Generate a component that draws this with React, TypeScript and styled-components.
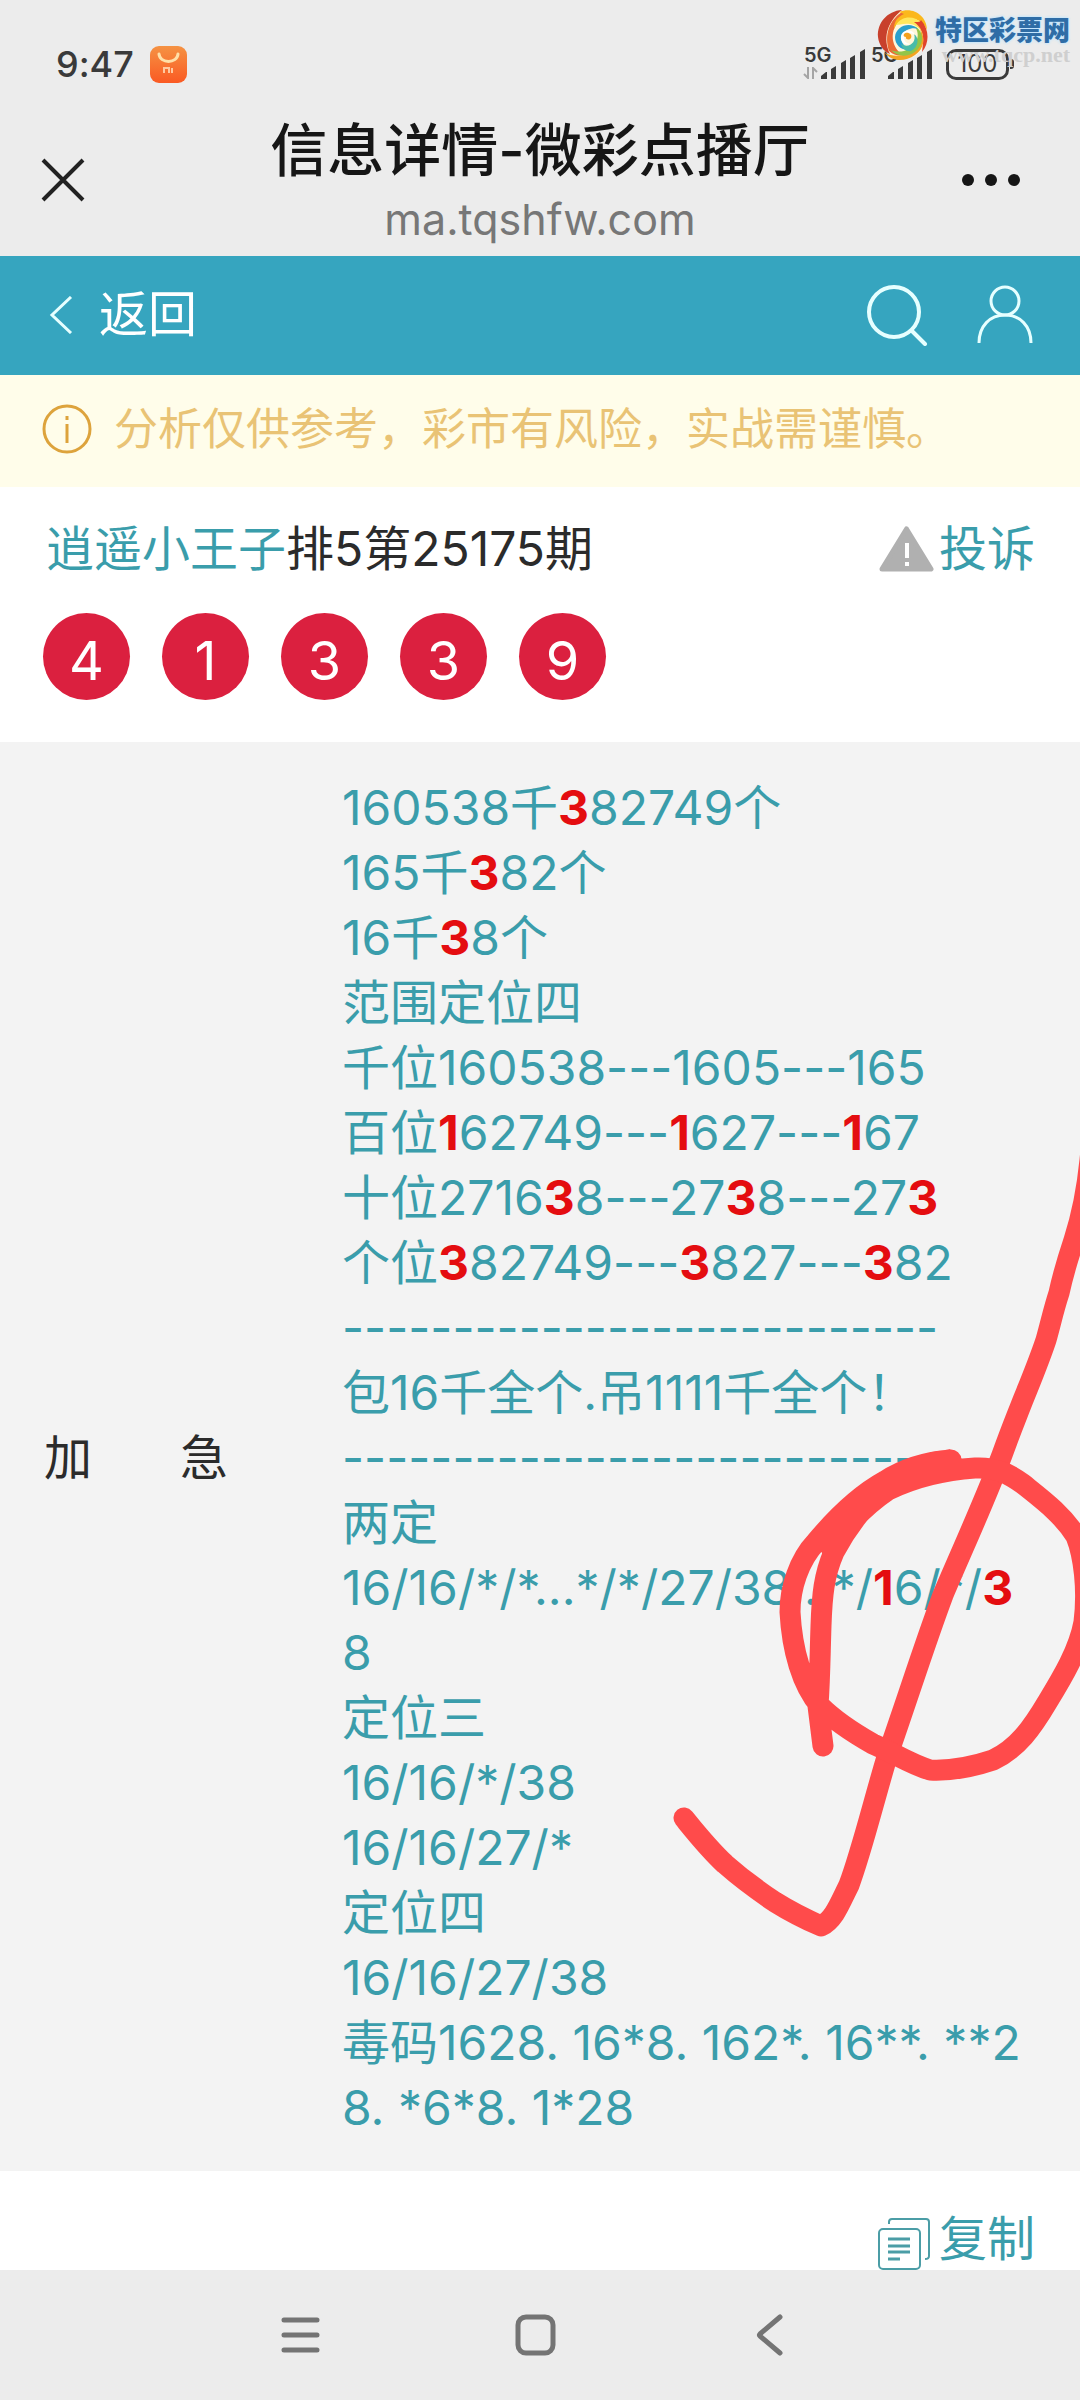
import React from "react";
import styled, { createGlobalStyle } from "styled-components";

const GlobalStyle = createGlobalStyle`
  *, *::before, *::after { box-sizing: border-box; }
  body {
    margin: 0;
    background: #ececec;
    font-family: Inter, "Noto Sans CJK SC", sans-serif;
    font-variant-ligatures: no-contextual;
    color: #2b2b2b;
  }
  button, a { font: inherit; color: inherit; }
`;

const TEAL = "#3a9dab";

const Page = styled.div`
  position: relative;
  display: flex;
  flex-direction: column;
  min-height: 100vh;
  overflow: hidden;
  background: #fff;
`;

const IconButton = styled.button`
  display: flex;
  align-items: center;
  padding: 0;
  border: 0;
  background: none;
  cursor: pointer;
`;

const StatusBar = styled.div`
  display: flex;
  align-items: center;
  justify-content: space-between;
  height: 84px;
  padding: 44px 66px 0 56px;
  background: #ececec;
`;

const StatusGroup = styled.div<{ $gap: number }>`
  display: flex;
  align-items: center;
  gap: ${(p) => p.$gap}px;
`;

const Clock = styled.time`
  font-size: 36px;
  line-height: 40px;
  font-weight: 500;
  color: #3a3a3a;
`;

const Signals = styled.div`
  display: flex;
  gap: 6px;
`;

const SignalBox = styled.div`
  position: relative;
  display: flex;
  padding-left: 17px;
`;

const Network = styled.span`
  position: absolute;
  left: 0;
  top: -4px;
  font-size: 20px;
  line-height: 20px;
  font-weight: 600;
  color: #3a3a3a;
`;

const DataArrows = styled.svg`
  position: absolute;
  left: -1px;
  bottom: 0;
`;

const Battery = styled.div`
  display: flex;
  align-items: center;
`;

const BatteryBody = styled.div`
  display: flex;
  align-items: center;
  justify-content: center;
  width: 63px;
  height: 31px;
  border: 3px solid #3a3a3a;
  border-radius: 10px;
  font-size: 24px;
  line-height: 24px;
  color: #3a3a3a;
`;

const BatteryTip = styled.div`
  width: 4px;
  height: 10px;
  margin-left: 1px;
  border-radius: 0 3px 3px 0;
  background: #3a3a3a;
`;

const Watermark = styled.div`
  position: absolute;
  top: 8px;
  right: 10px;
  display: flex;
  gap: 6px;
`;

const WatermarkText = styled.div`
  display: flex;
  flex-direction: column;
  padding-top: 7px;
`;

const WatermarkName = styled.span`
  font-size: 27px;
  line-height: 32px;
  font-weight: 900;
  color: #2f6da6;
  text-shadow: 0 0 3px #bfe4ff, 0 0 3px #bfe4ff;
`;

const WatermarkUrl = styled.span`
  font-family: "Liberation Serif", serif;
  font-size: 22px;
  line-height: 16px;
  font-weight: 700;
  text-align: right;
  color: #cfcfcf;
`;

const TitleBar = styled.header`
  display: grid;
  grid-template-columns: 1fr auto 1fr;
  align-items: center;
  height: 172px;
  padding: 20px 41px 0;
  background: #ececec;
`;

const TitleBlock = styled.div`
  display: flex;
  flex-direction: column;
  align-items: center;
  gap: 4px;
  padding-top: 5px;
`;

const PageTitle = styled.h1`
  margin: 0;
  font-size: 57px;
  line-height: 68px;
  font-weight: 500;
  color: #161616;
`;

const Domain = styled.span`
  font-size: 43px;
  line-height: 60px;
  color: #777;
`;

const MenuButton = styled(IconButton)`
  justify-self: end;
  padding-right: 19px;
`;

const NavBar = styled.nav`
  display: flex;
  align-items: center;
  justify-content: space-between;
  height: 119px;
  padding: 0 46px 2px 49px;
  background: #36a5bf;
  color: #fff;
`;

const BackLink = styled.a`
  display: flex;
  align-items: center;
  gap: 26px;
  font-size: 49px;
  line-height: 64px;
  text-decoration: none;
`;

const NavActions = styled.div`
  display: flex;
  gap: 48px;
`;

const Notice = styled.p`
  display: flex;
  align-items: center;
  gap: 22px;
  height: 112px;
  margin: 0;
  padding: 0 42px 4px;
  background: #fffdea;
  font-size: 44px;
  line-height: 64px;
  color: #e9c375;
`;

const Summary = styled.section`
  display: flex;
  flex-direction: column;
  gap: 32px;
  padding: 30px 45px 42px 43px;
`;

const SummaryHead = styled.div`
  display: flex;
  align-items: center;
  justify-content: space-between;
`;

const Issue = styled.h2`
  margin: 0;
  padding-left: 3px;
  font-size: 48px;
  line-height: 64px;
  font-weight: 400;
`;

const Author = styled.a`
  color: ${TEAL};
  text-decoration: none;
`;

const ActionButton = styled(IconButton)<{ $gap: number }>`
  gap: ${(p) => p.$gap}px;
  font-size: 48px;
  line-height: 64px;
  color: ${TEAL};
`;

const Balls = styled.ol`
  display: flex;
  gap: 32px;
  margin: 0;
  padding: 0;
  list-style: none;
`;

const Ball = styled.li`
  display: flex;
  align-items: center;
  justify-content: center;
  width: 87px;
  height: 87px;
  padding-top: 8px;
  border-radius: 50%;
  background: #db203f;
  font-size: 54px;
  line-height: 64px;
  color: #fff;
`;

const Record = styled.section`
  position: relative;
  display: grid;
  grid-template-columns: 298px 1fr;
  align-items: center;
  padding: 33px 43px 31px 44px;
  background: #f3f3f3;
`;

const RecordLabel = styled.h3`
  display: flex;
  gap: 88px;
  margin: 0;
  font-size: 48px;
  line-height: 65px;
  font-weight: 400;
`;

const RecordBody = styled.div`
  font-size: 48px;
  line-height: 65px;
  color: ${TEAL};
`;

const Line = styled.p`
  height: 65px;
  margin: 0;
  white-space: pre;
`;

const Hit = styled.strong`
  font-weight: 700;
  color: #e40d10;
`;

const PenMarks = styled.svg`
  position: absolute;
  right: 0;
  top: 338px;
  pointer-events: none;
`;

const Footer = styled.footer`
  display: flex;
  justify-content: flex-end;
  align-items: flex-start;
  height: 99px;
  padding: 36px 45px 0;
`;

const CopyIcon = styled.svg`
  margin-top: 10px;
`;

const SystemNav = styled.nav`
  display: flex;
  flex: 1;
  align-items: center;
  justify-content: center;
  gap: 191px;
  min-height: 130px;
  padding-right: 10px;
  background: #ececec;
`;

/* Winning digits are wrapped in brackets. */
const LINES = [
  "160538千[3]82749个",
  "165千[3]82个",
  "16千[3]8个",
  "范围定位四",
  "千位160538---1605---165",
  "百位[1]62749---[1]627---[1]67",
  "十位2716[3]8---27[3]8---27[3]",
  "个位[3]82749---[3]827---[3]82",
  "---------------------------",
  "包16千全个.吊1111千全个！",
  "---------------------------",
  "两定",
  "16/16/*/*...*/*/27/38...*/[1]6/*/[3]",
  "8",
  "定位三",
  "16/16/*/38",
  "16/16/27/*",
  "定位四",
  "16/16/27/38",
  "毒码1628. 16*8. 162*. 16**. **2",
  "8. *6*8. 1*28",
];

function renderLine(text: string) {
  return text
    .split(/(\[\d\])/)
    .map((part, i) =>
      part.startsWith("[") ? <Hit key={i}>{part[1]}</Hit> : part
    );
}

function Signal({ data }: { data?: boolean }) {
  return (
    <SignalBox>
      <Network>5G</Network>
      {data && (
        <DataArrows width="16" height="12" viewBox="0 0 16 12" fill="none" stroke="#a5a5a5" strokeWidth="2">
          <path d="M5 0v11L1 7M10 12V1l4 4" />
        </DataArrows>
      )}
      <svg width="44" height="30" viewBox="0 0 44 30" fill="#3a3a3a">
        <path d="M0 30v-3l5-4h1v7zM10 30V20l5-3v13zM20 30V14l5-3v19zM29 30V9l5-3v24zM39 30V3l5-3v30z" />
      </svg>
    </SignalBox>
  );
}

function SwirlLogo() {
  return (
    <svg width="52" height="54" viewBox="0 0 52 54">
      <circle cx="26" cy="27" r="24" fill="#fff6da" />
      <path d="M25 2C10 3 0 15 1 29c1 8 5 14 12 17C6 31 9 15 25 2z" fill="#c8402c" />
      <path d="M27 3C12 11 7 27 12 43c6 5 10 5 14 4C12 38 12 18 28 8z" fill="#ea6a35" />
      <path d="M22 4c14-6 28 4 28 18-4-9-12-13-21-11-6 1-10 5-12 10C17 14 20 9 27 6z" fill="#fbb81c" />
      <path d="M19 17c5-9 18-10 25-2 4 5 5 11 3 17-1-9-6-15-14-16-6-1-11 1-14 1z" fill="#ffe75c" />
      <path d="M44 12c8 9 9 22 1 32 1-8 2-14 0-20-2-5-5-8-8-10 5 0 6 0 7-2z" fill="#e0432b" />
      <path d="M8 45c10 5 23 3 31-6 5-6 6-12 4-18 6 9 4 20-5 26-10 7-23 7-30-2z" fill="#f2a423" />
      <path d="M14 42c10 4 20 0 25-8 3-6 2-12-2-16 8 3 10 13 6 20-6 11-21 13-29 4z" fill="#93c548" />
      <path d="M41 21c-8-8-22-3-23 8 0 10 10 16 18 11-12 1-16-13-6-18 4-2 8-2 11-1z" fill="#2ba0cc" />
      <path d="M24 36c8 5 16-2 13-10 6 4 4 14-3 17-4 1-9-2-10-7z" fill="#49bba8" />
      <path d="M38 27c-2-6-12-6-14 1-1 6 4 10 9 8-8-1-7-10-1-11 3 0 5 1 6 2z" fill="#fff" />
      <path d="M27 26c3-3 9 0 7 4-2 3-6 1-5-1-2 0-3-1-2-3z" fill="#f5a11c" />
    </svg>
  );
}

export default function App() {
  return (
    <Page lang="zh-CN">
      <GlobalStyle />
      <StatusBar>
        <StatusGroup $gap={16}>
          <Clock>9:47</Clock>
          <svg width="37" height="37" viewBox="0 0 37 37" fill="none">
            <defs>
              <linearGradient id="store" x1="0" y1="0" x2="0" y2="1">
                <stop offset="0" stopColor="#f59243" />
                <stop offset="1" stopColor="#fa5a23" />
              </linearGradient>
            </defs>
            <rect width="37" height="37" rx="9" fill="url(#store)" />
            <path d="M9 8c1 10 18 10 19 0" stroke="#ffe0a8" strokeWidth="3" strokeLinecap="round" />
            <path d="M14 27v-5h5v5M22 22v5" stroke="#ffc9a0" strokeWidth="2" />
          </svg>
        </StatusGroup>
        <StatusGroup $gap={14}>
          <Signals>
            <Signal data />
            <Signal />
          </Signals>
          <Battery>
            <BatteryBody>100</BatteryBody>
            <BatteryTip />
          </Battery>
        </StatusGroup>
      </StatusBar>
      <Watermark>
        <SwirlLogo />
        <WatermarkText>
          <WatermarkName>特区彩票网</WatermarkName>
          <WatermarkUrl>www.tqcp.net</WatermarkUrl>
        </WatermarkText>
      </Watermark>

      <TitleBar>
        <IconButton aria-label="关闭">
          <svg width="44" height="44" viewBox="0 0 44 44" stroke="#222" strokeWidth="4">
            <path d="M2 2l40 40M42 2L2 42" />
          </svg>
        </IconButton>
        <TitleBlock>
          <PageTitle>信息详情-微彩点播厅</PageTitle>
          <Domain>ma.tqshfw.com</Domain>
        </TitleBlock>
        <MenuButton aria-label="更多">
          <svg width="58" height="12" viewBox="0 0 58 12" fill="#161616">
            <circle cx="6" cy="6" r="6" />
            <circle cx="29" cy="6" r="6" />
            <circle cx="52" cy="6" r="6" />
          </svg>
        </MenuButton>
      </TitleBar>

      <NavBar>
        <BackLink href="#back">
          <svg width="24" height="38" viewBox="0 0 24 38" fill="none" stroke="#e6ffff" strokeWidth="3">
            <path d="M22 1L3 19l19 18" />
          </svg>
          返回
        </BackLink>
        <NavActions>
          <IconButton aria-label="搜索">
            <svg width="62" height="62" viewBox="0 0 62 62" fill="none" stroke="#e6ffff" strokeWidth="4" strokeLinecap="round">
              <circle cx="28" cy="28" r="25" />
              <path d="M46 47l13 13" />
            </svg>
          </IconButton>
          <IconButton aria-label="我的">
            <svg width="58" height="62" viewBox="0 0 58 62" fill="none" stroke="#e6ffff" strokeWidth="3">
              <circle cx="29" cy="17" r="14" />
              <path d="M3 59C3 42 14 31 29 31s26 11 26 28" />
            </svg>
          </IconButton>
        </NavActions>
      </NavBar>

      <Notice>
        <svg width="50" height="50" viewBox="0 0 50 50" fill="none" stroke="#dda33c" strokeWidth="3">
          <circle cx="25" cy="25" r="23" />
          <path d="M25 20v19M25 12v4" />
        </svg>
        分析仅供参考，彩市有风险，实战需谨慎。
      </Notice>

      <Summary>
        <SummaryHead>
          <Issue>
            <Author href="#author">逍遥小王子</Author>排5第25175期
          </Issue>
          <ActionButton $gap={5}>
            <svg width="55" height="46" viewBox="0 0 55 46">
              <path d="M27.500 3L52 43H3z" fill="#b0b0b0" stroke="#b0b0b0" strokeWidth="5" strokeLinejoin="round" />
              <path d="M28 17v15M28 36v4" stroke="#fff" strokeWidth="4" />
            </svg>
            投诉
          </ActionButton>
        </SummaryHead>
        <Balls>
          {[4, 1, 3, 3, 9].map((n, i) => (
            <Ball key={i}>{n}</Ball>
          ))}
        </Balls>
      </Summary>

      <Record>
        <RecordLabel>
          <span>加</span>
          <span>急</span>
        </RecordLabel>
        <RecordBody>
          {LINES.map((line, i) => (
            <Line key={i}>{renderLine(line)}</Line>
          ))}
        </RecordBody>
        <PenMarks width="420" height="880" viewBox="660 1080 420 880" fill="none" stroke="#ff4b4b" strokeWidth="21" strokeLinecap="round" strokeLinejoin="round">
          <path d="M684 1818C697 1834 708 1848 725 1864C742 1879 757 1890 775 1902C791 1912 805 1919 821 1926C834 1920 840 1903 849 1885C862 1850 874 1800 887 1757C907 1700 925 1643 943 1595C962 1550 983 1505 1002 1455C1011 1430 1016 1418 1023 1400C1032 1378 1040 1358 1046 1340C1051 1322 1054 1308 1059 1293C1064 1270 1068 1258 1074 1240C1082 1215 1087 1190 1090 1160L1094 1120" />
          <path d="M823 1746L818 1706C820 1676 820 1655 821 1626C822 1595 824 1575 834 1552C850 1522 870 1498 895 1477C915 1465 932 1461 951 1460C925 1462 905 1468 885 1481C858 1496 836 1518 816 1542C799 1560 790 1588 790 1612C792 1650 802 1685 820 1706C834 1720 850 1731 873 1744C892 1752 910 1764 930 1770C950 1771 972 1767 993 1760C1018 1748 1032 1728 1048 1701C1062 1678 1079 1650 1084 1622C1088 1590 1084 1556 1076 1536C1062 1514 1043 1500 1023 1484C1008 1473 995 1467 975 1468C945 1470 915 1477 888 1490C863 1507 845 1527 831 1548" />
        </PenMarks>
      </Record>

      <Footer>
        <ActionButton $gap={9}>
          <CopyIcon width="52" height="52" viewBox="0 0 52 52" fill="none" stroke="#4b9da6" strokeWidth="2">
            <path d="M11 6V4q0-3 3-3h34q3 0 3 3v34q0 3-4 3" />
            <rect x="1" y="11" width="41" height="40" rx="4" />
            <path d="M10 21h22M10 28h22M10 34h22M10 41h12" strokeWidth="3" />
          </CopyIcon>
          复制
        </ActionButton>
      </Footer>

      <SystemNav>
        <IconButton aria-label="菜单">
          <svg width="44" height="44" viewBox="0 0 44 44" stroke="#747474" strokeWidth="5" strokeLinecap="round">
            <path d="M6 7h33M6 22h33M6 37h33" />
          </svg>
        </IconButton>
        <IconButton aria-label="主屏幕">
          <svg width="44" height="44" viewBox="0 0 44 44" fill="none" stroke="#747474" strokeWidth="5">
            <rect x="5" y="4" width="35" height="36" rx="8" />
          </svg>
        </IconButton>
        <IconButton aria-label="后退">
          <svg width="44" height="44" viewBox="0 0 44 44" fill="none" stroke="#747474" strokeWidth="5" strokeLinecap="round" strokeLinejoin="round">
            <path d="M32 4L12 21q-1 1 0 2l20 17" />
          </svg>
        </IconButton>
      </SystemNav>
    </Page>
  );
}
